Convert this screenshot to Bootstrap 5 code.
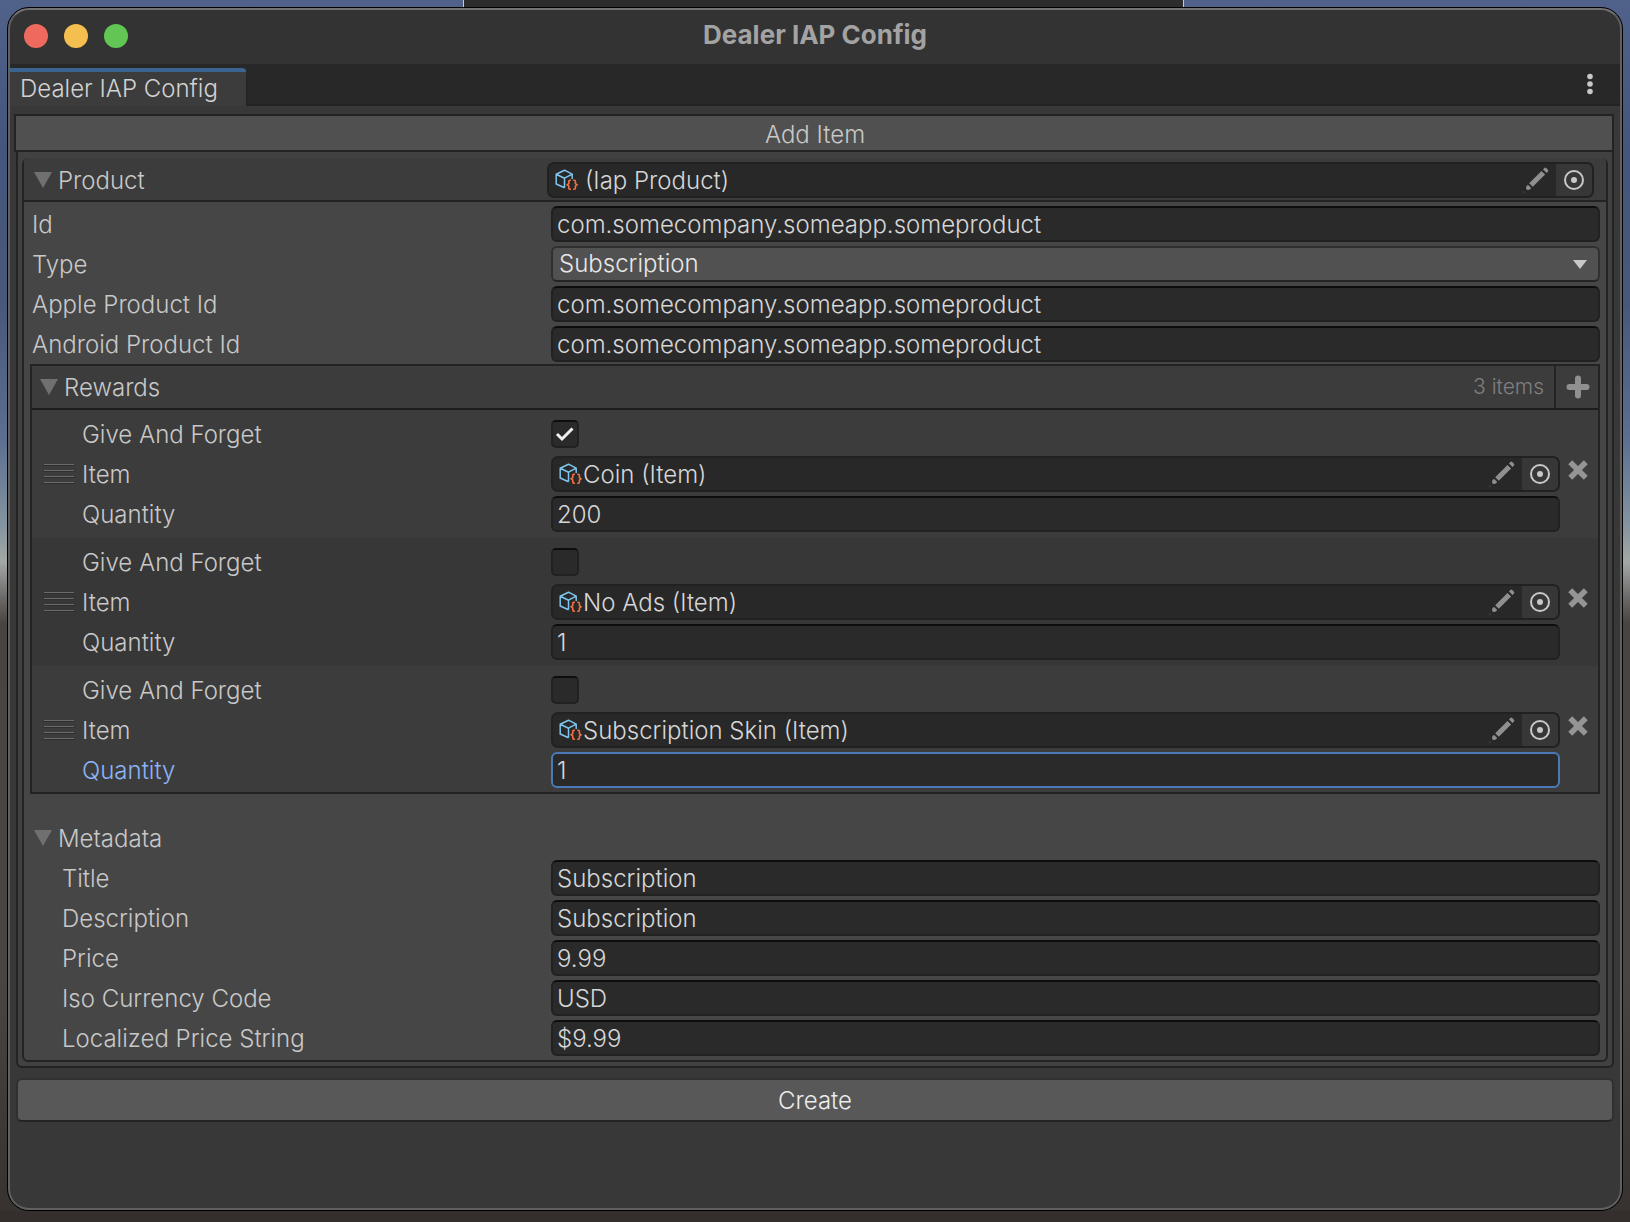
<!DOCTYPE html>
<html lang="en">
<head>
<meta charset="utf-8">
<meta name="viewport" content="width=device-width, initial-scale=1">
<title>Dealer IAP Config</title>
<link href="https://cdn.jsdelivr.net/npm/bootstrap@5.3.0/dist/css/bootstrap.min.css" rel="stylesheet">
<style>
:root{--line:#232323;--txt:#c8c8c8}
body{font-family:Inter,"Liberation Sans",sans-serif;font-size:24px;font-weight:300;line-height:36px;color:var(--txt);min-height:100vh;padding:7px 7px 11px;
 background:linear-gradient(#50628a 0,#44567c 12%,#48587a 25%,#5c6f90 36%,#8494a0 43%,#a3a8a5 46%,#6a6866 49%,#4a4440 51%,#4b4541 80%,#37312f 100%)}
.desk-strip{left:463px;right:446px;top:0;height:8px;background:#2c2c2c;border:solid #c8c8c8;border-width:0 1px}
.desk-line{left:0;right:0;bottom:0;height:11px;background:#342e2c}
.win{background:#383838;border:1px solid #000;border-radius:22px;min-height:calc(100vh - 18px)}
.win-edge{inset:0;border:2px solid #606060;border-top-color:#727272;border-radius:21px;pointer-events:none}
.titlebar{height:56px;background:#333;padding:0 26px 0 16px}
.dot{width:24px;height:24px;border-radius:50%;border:0;padding:0}
.dot-r{background:#ee6a5f}.dot-y{background:#f5bf4f}.dot-g{background:#62c655}
.win-title{font-size:26px;font-weight:700;color:#a3a3a3;left:0;right:0;top:9px;pointer-events:none}
.tabstrip{height:42px;background:#282828;border-bottom:2px solid var(--line)}
.tab-on{height:38px;margin-bottom:-2px;background:#3c3c3c;border-top:4px solid #3a6591;border-right:1px solid var(--line);border-radius:0 5px 0 0;padding:0 28px 0 12px;color:#d2d2d2;line-height:34px;text-decoration:none}
.bare{background:none;border:0;padding:0;color:inherit;line-height:inherit;font-weight:inherit}
.dots{margin-right:25px}
.pane{padding:8px}
.add-btn{height:38px;background:#505050;border:2px solid var(--line);border-radius:0;color:var(--txt);font-weight:inherit;line-height:34px;margin-left:-2px;width:calc(100% + 2px);padding:2px 0 0 2px}
.outer-box{background:#414141;border:2px solid var(--line);border-top:0;border-radius:0 0 6px 6px;padding:6px 4px 4px}
.inner-box{background:#464646;border:2px solid var(--line);border-top:0;border-radius:6px;padding-bottom:2px}
.head-bar{height:44px;background:#3c3c3c;border-bottom:2px solid var(--line);border-radius:4px 4px 0 0;padding:4px 12px 2px 10px}
.head-bar .head-label{flex:0 0 513px}
.fold{gap:6px}
.fold span,.name-col{padding-top:2px}
.body-rows{padding:2px 6px 0}
.line-row{height:40px}
.name-col{flex:0 0 521px;padding-left:2px;color:var(--txt)}
.meta-rows .name-col{padding-left:32px}
.fld{height:36px;background:#2a2a2a;border:2px solid #212121;border-top-color:#0d0d0d;border-radius:6px;color:#d6d6d6;font:inherit;line-height:32px;padding:0 4px}
.fld:focus{background:#2a2a2a;color:#d6d6d6;box-shadow:none;border-color:#4a7ab8}
.fld-on{border-color:#4a7ab8}
.drop{background:#515151;border:2px solid #303030;border-bottom-color:#242424;color:#e8e8e8;padding:0 40px 2px 6px;background-image:none}
.drop-arrow{right:13px;top:14px;pointer-events:none}
.obj{height:36px;background:#282828;border:2px solid #212121;border-radius:7px;overflow:hidden;padding-left:6px}
.obj input{background:none;border:0;padding:2px 0 0;color:#d6d6d6;font-weight:inherit;min-width:0;height:36px;outline:0}
.obj-gap{margin-right:6px}
.pen{padding-right:7px}
.pick{width:36px;background:#373737}
.rewards{border:2px solid var(--line);background:#3c3c3c}
.rew-head{height:44px;border-bottom:2px solid #1e1e1e;padding-left:8px}
.count{font-size:21px;color:#808080;padding-right:10px}
.plus{width:44px;padding-left:2px;border-left:2px solid var(--line)}
.rew{padding:4px 38px 4px 8px}
.rew:nth-child(odd){background:#373737}
.rew:last-child{padding-bottom:2px}
.grip{flex:0 0 42px;padding-left:3px}
.rew .name-col{flex-basis:469px;padding-left:0}
.kill{right:10px;top:50px;line-height:0}
.box{width:28px;height:28px;background:#2a2a2a;border:2px solid #212121;border-top-color:#0d0d0d;border-radius:5px!important;margin:0}
.box:checked{background-color:#2a2a2a;border-color:#0d0d0d #212121 #212121;background-size:24px 24px;
 background-image:url("data:image/svg+xml,%3csvg xmlns='http://www.w3.org/2000/svg' viewBox='0 0 24 24'%3e%3cpath fill='none' stroke='%23f0f0f0' stroke-width='3' d='M4 12l5 5L19.500 6.500'/%3e%3c/svg%3e")}
.focus-name{color:#8ab4f8}
.create{height:44px;margin-top:10px;background:#585858;border:2px solid #303030;border-bottom-color:#242424;border-radius:6px;color:#ececec;font-weight:inherit;line-height:38px;padding:2px 0 0}
svg{display:block;flex:none}
</style>
</head>
<body>
<svg width="0" height="0" class="position-absolute">
 <defs>
 <symbol id="cube" viewBox="0 0 24 22"><g fill="none" stroke="#7fc6ee" stroke-width="1.500" stroke-linejoin="round"><path d="M9.500 18.800L1.200 15V5.200L9.500 1.200L17.200 5.200V10M1.200 5.200L9.500 9.200L17.200 5.200M9.500 9.200V18.800"/></g><g fill="none" stroke="#f2703f" stroke-width="1.600"><path d="M16 11.300h-1.200q-1 0-1 1v2.200l-1.600 1.300l1.600 1.300v2.200q0 1 1 1H16M18.200 11.300h1.200q1 0 1 1v2.200l1.600 1.300l-1.600 1.300v2.200q0 1-1 1H18.200"/></g></symbol>
 <symbol id="pencil" viewBox="0 0 26 26"><g fill="#8f8f8f"><path d="M18.500 3.900L22.100 7.500L9.800 19.800L6.200 16.200z"/><path d="M20 2.400L21.600 .800q.8 -.6 1.600 .2l1.800 1.800q.7 .8 0 1.600L23.600 6z"/><path d="M4.900 17.800L8.200 21.100Q7 23 5 23Q3 23 3 21Q3 19 4.900 17.800z"/></g><circle cx="1" cy="25" r=".6" fill="#666"/></symbol>
 <symbol id="ring" viewBox="0 0 20 20"><circle cx="10" cy="10" r="9" fill="none" stroke="#c8c8c8" stroke-width="2"/><circle cx="10" cy="10" r="3" fill="#c8c8c8"/></symbol>
 <symbol id="tri" viewBox="0 0 18 16"><path fill="#707070" d="M0 0h18L9 16z"/></symbol>
 <symbol id="lines" viewBox="0 0 32 20"><path stroke="#2f2f2f" d="M0 1.500h32M0 7.500h32M0 13.500h32M0 19.500h32"/><path stroke="#6b6b6b" d="M1 .500h30M1 6.500h30M1 12.500h30M1 18.500h30"/></symbol>
 <symbol id="cross" viewBox="0 0 18 18"><path stroke="#959595" stroke-width="5" d="M2 2l14 14M16 2L2 16"/></symbol>
 </defs>
</svg>
<div class="desk-line position-absolute"></div>
<div class="desk-strip position-absolute"></div>
<main class="win position-relative overflow-hidden">
 <header class="titlebar position-relative d-flex align-items-center gap-3">
  <button class="dot dot-r" aria-label="Close"></button><button class="dot dot-y" aria-label="Minimize"></button><button class="dot dot-g" aria-label="Zoom"></button>
  <div class="win-title position-absolute text-center">Dealer IAP Config</div>
 </header>
 <nav class="tabstrip d-flex align-items-end justify-content-between">
  <a href="#" class="tab-on">Dealer IAP Config</a>
  <button class="bare dots align-self-center px-1" aria-label="Menu"><svg width="6" height="22" viewBox="0 0 6 22" fill="#c8c8c8"><circle cx="3" cy="3.500" r="2.800"/><circle cx="3" cy="11" r="2.800"/><circle cx="3" cy="18.500" r="2.800"/></svg></button>
 </nav>
 <form class="pane" onsubmit="return false">
  <button type="button" class="add-btn d-block">Add Item</button>
  <section class="outer-box"><div class="inner-box">
   <div class="head-bar d-flex align-items-center">
    <button type="button" class="bare fold head-label d-flex align-items-center text-start"><svg width="18" height="16"><use href="#tri"/></svg><span>Product</span></button>
    <div class="obj d-flex align-items-center flex-grow-1"><svg class="obj-gap" width="24" height="22"><use href="#cube"/></svg><input class="flex-grow-1" aria-label="Product" readonly value="(Iap Product)"><button type="button" class="bare pen" aria-label="Edit"><svg width="26" height="26"><use href="#pencil"/></svg></button><button type="button" class="bare pick h-100 d-flex align-items-center justify-content-center" aria-label="Pick"><svg width="20" height="20"><use href="#ring"/></svg></button></div>
   </div>
   <div class="body-rows">
    <div class="line-row d-flex align-items-center"><label class="name-col" for="pid">Id</label><input id="pid" class="form-control fld" value="com.somecompany.someapp.someproduct"></div>
    <div class="line-row d-flex align-items-center"><label class="name-col" for="ptype">Type</label><div class="position-relative flex-grow-1"><select id="ptype" class="form-select fld drop"><option>Subscription</option></select><svg class="drop-arrow position-absolute" width="14" height="9" viewBox="0 0 14 9"><path fill="#c8c8c8" d="M0 0h14L7 9z"/></svg></div></div>
    <div class="line-row d-flex align-items-center"><label class="name-col" for="apple">Apple Product Id</label><input id="apple" class="form-control fld" value="com.somecompany.someapp.someproduct"></div>
    <div class="line-row d-flex align-items-center"><label class="name-col" for="android">Android Product Id</label><input id="android" class="form-control fld" value="com.somecompany.someapp.someproduct"></div>
    <section class="rewards">
     <div class="rew-head d-flex align-items-center"><button type="button" class="bare fold d-flex align-items-center flex-grow-1"><svg width="18" height="16"><use href="#tri"/></svg><span>Rewards</span></button><span class="count">3 items</span><button type="button" class="bare plus h-100 d-flex align-items-center justify-content-center" aria-label="Add reward"><svg width="24" height="24" viewBox="0 0 24 24"><path stroke="#909090" stroke-width="6" stroke-linecap="round" d="M12 3.500v17M3.500 12h17"/></svg></button></div>
     <div class="rew position-relative">
      <div class="line-row d-flex align-items-center"><span class="grip"></span><label class="name-col" for="g1">Give And Forget</label><input id="g1" type="checkbox" class="form-check-input box" checked></div>
      <div class="line-row d-flex align-items-center"><span class="grip"><svg width="32" height="20"><use href="#lines"/></svg></span><label class="name-col" for="i1">Item</label><div class="obj d-flex align-items-center flex-grow-1"><svg width="24" height="22"><use href="#cube"/></svg><input id="i1" class="flex-grow-1" readonly value="Coin (Item)"><button type="button" class="bare pen" aria-label="Edit"><svg width="26" height="26"><use href="#pencil"/></svg></button><button type="button" class="bare pick h-100 d-flex align-items-center justify-content-center" aria-label="Pick"><svg width="20" height="20"><use href="#ring"/></svg></button></div></div>
      <div class="line-row d-flex align-items-center"><span class="grip"></span><label class="name-col" for="q1">Quantity</label><input id="q1" class="form-control fld" value="200"></div>
      <button type="button" class="bare kill position-absolute" aria-label="Remove"><svg width="20" height="20"><use href="#cross"/></svg></button>
     </div>
     <div class="rew position-relative">
      <div class="line-row d-flex align-items-center"><span class="grip"></span><label class="name-col" for="g2">Give And Forget</label><input id="g2" type="checkbox" class="form-check-input box"></div>
      <div class="line-row d-flex align-items-center"><span class="grip"><svg width="32" height="20"><use href="#lines"/></svg></span><label class="name-col" for="i2">Item</label><div class="obj d-flex align-items-center flex-grow-1"><svg width="24" height="22"><use href="#cube"/></svg><input id="i2" class="flex-grow-1" readonly value="No Ads (Item)"><button type="button" class="bare pen" aria-label="Edit"><svg width="26" height="26"><use href="#pencil"/></svg></button><button type="button" class="bare pick h-100 d-flex align-items-center justify-content-center" aria-label="Pick"><svg width="20" height="20"><use href="#ring"/></svg></button></div></div>
      <div class="line-row d-flex align-items-center"><span class="grip"></span><label class="name-col" for="q2">Quantity</label><input id="q2" class="form-control fld" value="1"></div>
      <button type="button" class="bare kill position-absolute" aria-label="Remove"><svg width="20" height="20"><use href="#cross"/></svg></button>
     </div>
     <div class="rew position-relative">
      <div class="line-row d-flex align-items-center"><span class="grip"></span><label class="name-col" for="g3">Give And Forget</label><input id="g3" type="checkbox" class="form-check-input box"></div>
      <div class="line-row d-flex align-items-center"><span class="grip"><svg width="32" height="20"><use href="#lines"/></svg></span><label class="name-col" for="i3">Item</label><div class="obj d-flex align-items-center flex-grow-1"><svg width="24" height="22"><use href="#cube"/></svg><input id="i3" class="flex-grow-1" readonly value="Subscription Skin (Item)"><button type="button" class="bare pen" aria-label="Edit"><svg width="26" height="26"><use href="#pencil"/></svg></button><button type="button" class="bare pick h-100 d-flex align-items-center justify-content-center" aria-label="Pick"><svg width="20" height="20"><use href="#ring"/></svg></button></div></div>
      <div class="line-row d-flex align-items-center"><span class="grip"></span><label class="name-col focus-name" for="q3">Quantity</label><input id="q3" class="form-control fld fld-on" value="1"></div>
      <button type="button" class="bare kill position-absolute" aria-label="Remove"><svg width="20" height="20"><use href="#cross"/></svg></button>
     </div>
    </section>
    <section class="meta-rows mt-4">
     <div class="line-row d-flex align-items-center ps-1"><button type="button" class="bare fold d-flex align-items-center"><svg width="18" height="16"><use href="#tri"/></svg><span>Metadata</span></button></div>
     <div class="line-row d-flex align-items-center"><label class="name-col" for="mt">Title</label><input id="mt" class="form-control fld" value="Subscription"></div>
     <div class="line-row d-flex align-items-center"><label class="name-col" for="md">Description</label><input id="md" class="form-control fld" value="Subscription"></div>
     <div class="line-row d-flex align-items-center"><label class="name-col" for="mp">Price</label><input id="mp" class="form-control fld" value="9.99"></div>
     <div class="line-row d-flex align-items-center"><label class="name-col" for="mc">Iso Currency Code</label><input id="mc" class="form-control fld" value="USD"></div>
     <div class="line-row d-flex align-items-center"><label class="name-col" for="ml">Localized Price String</label><input id="ml" class="form-control fld" value="$9.99"></div>
    </section>
   </div>
  </div></section>
  <button type="submit" class="create d-block w-100">Create</button>
 </form>
 <div class="win-edge position-absolute"></div>
</main>
<script src="https://cdn.jsdelivr.net/npm/bootstrap@5.3.0/dist/js/bootstrap.bundle.min.js"></script>
</body>
</html>
